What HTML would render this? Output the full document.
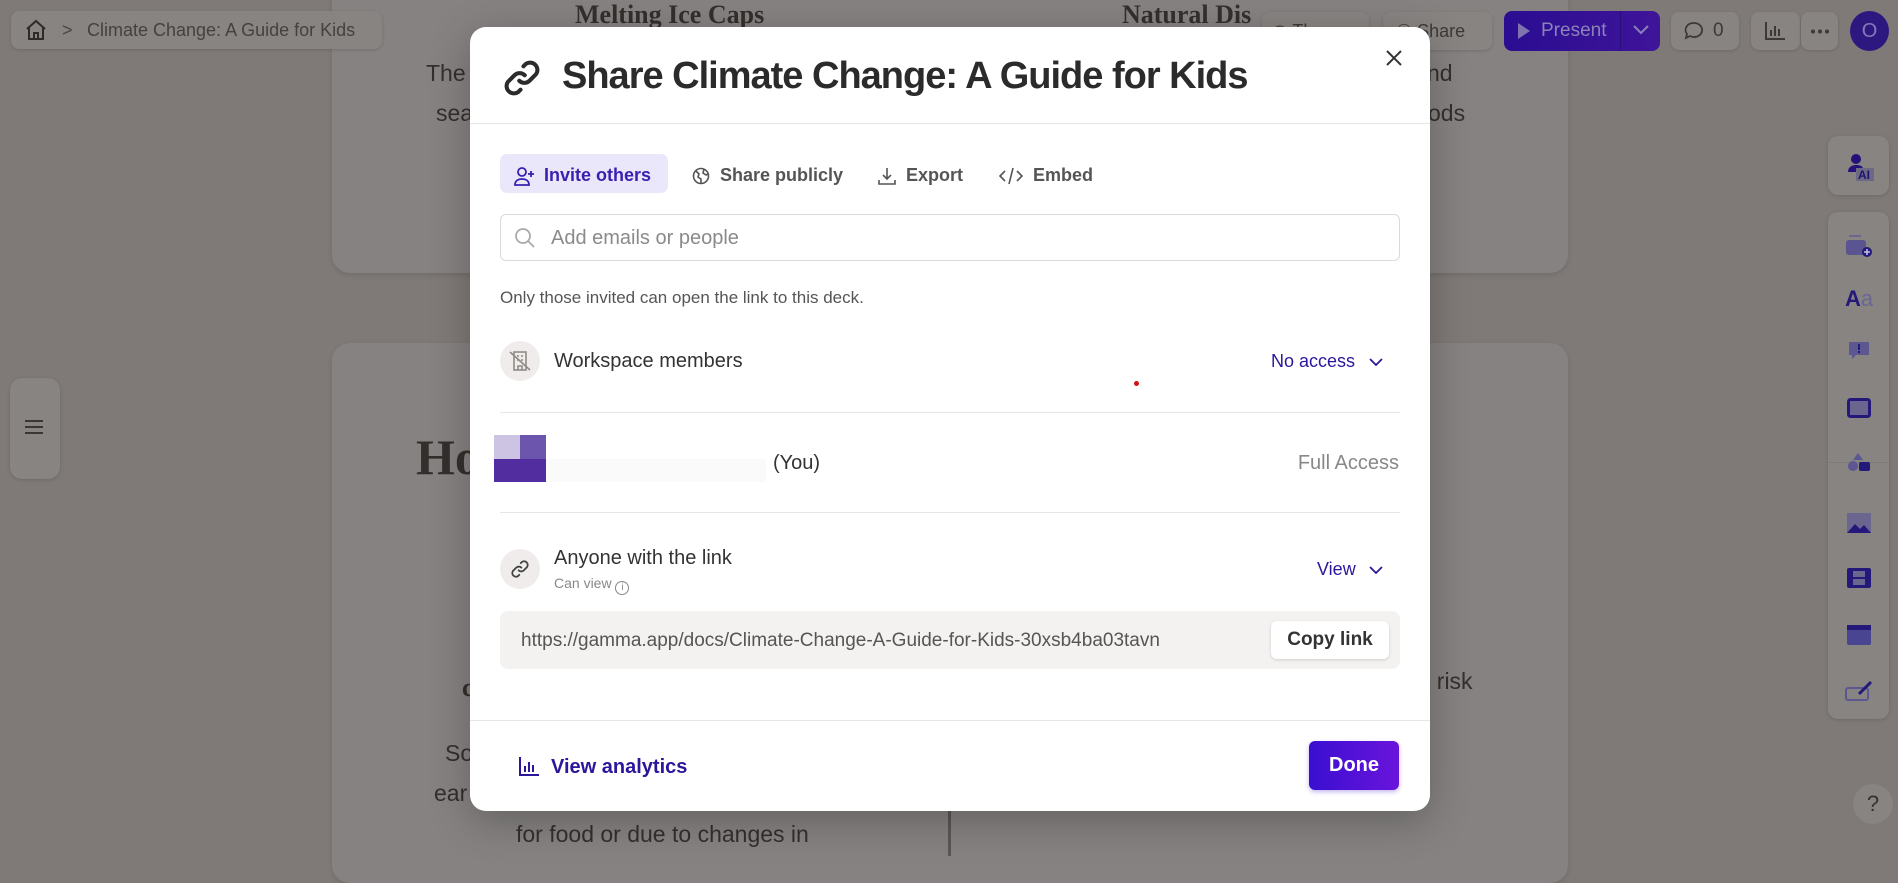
<!DOCTYPE html>
<html><head><meta charset="utf-8"><style>
*{box-sizing:border-box;margin:0;padding:0}
body{width:1898px;height:856px;overflow:hidden;background:#7f7a77;font-family:"Liberation Sans",sans-serif;position:relative}
.abs{position:absolute}
.card{position:absolute;background:#858281;border-radius:18px;box-shadow:0 2px 6px rgba(0,0,0,.12)}
.bgt{position:absolute;color:#332f2d;font-size:23px;white-space:nowrap}
.serif{font-family:"Liberation Serif",serif;font-weight:bold}
.tb{position:absolute;background:#878482;border-radius:8px;box-shadow:0 1px 3px rgba(0,0,0,.15);height:38px;top:12px}
.modal{position:absolute;left:470px;top:27px;width:960px;height:784px;background:#fff;border-radius:16px;box-shadow:0 10px 40px rgba(0,0,0,.25)}
.m{position:absolute;white-space:nowrap}
.hr{position:absolute;height:1px;background:#e8e6e4}
.tab{position:absolute;top:129px;height:39px;display:flex;align-items:center;font-size:18px;font-weight:bold;color:#555}
.side{position:absolute;left:1828px;width:61px;background:#878482;border-radius:10px;box-shadow:0 1px 4px rgba(0,0,0,.15)}
.ic{position:absolute}
</style></head><body>
<div class="card" style="left:332px;top:-20px;width:1236px;height:293px"></div>
<div class="card" style="left:332px;top:343px;width:1236px;height:540px"></div>
<div class="abs" style="left:948px;top:805px;width:3px;height:51px;background:#5a5654"></div>
<div class="bgt serif" style="left:575px;top:0px;font-size:26px">Melting Ice Caps</div>
<div class="bgt serif" style="left:1122px;top:0px;font-size:26px">Natural Dis</div>
<div class="bgt" style="left:426px;top:60px">The</div>
<div class="bgt" style="left:436px;top:100px">sea</div>
<div class="bgt" style="left:1427px;top:60px">nd</div>
<div class="bgt" style="left:1428px;top:100px">ods</div>
<div class="bgt serif" style="left:416px;top:428px;font-size:50px">Ho</div>
<div class="bgt" style="left:445px;top:740px">So</div>
<div class="bgt" style="left:434px;top:780px">ear</div>
<div class="bgt" style="left:516px;top:821px">for food or due to changes in</div>
<div class="bgt" style="left:1424px;top:668px">t risk</div>
<div class="bgt serif" style="left:462px;top:673px;font-size:26px">c</div>
<!-- top bar -->
<div class="tb" style="left:11px;width:371px;top:11px;height:38px"></div>
<svg class="abs" style="left:24px;top:19px" width="24" height="22" viewBox="0 0 24 22" fill="none" stroke="#2f2b29" stroke-width="2"><path d="M3 10L12 2l9 8M5 8v12h14V8M10 20v-6h4v6"/></svg>
<div class="m" style="left:62px;top:20px;color:#4a4644;font-size:18px">&gt;</div>
<div class="m" style="left:87px;top:20px;color:#45413f;font-size:18px">Climate Change: A Guide for Kids</div>
<div class="tb" style="left:1262px;width:107px"></div>
<div class="m" style="left:1272px;top:21px;color:#3d3937;font-size:18px">◷ Th</div>
<div class="tb" style="left:1383px;width:109px"></div>
<div class="m" style="left:1396px;top:21px;color:#3d3937;font-size:18px">⚇ Share</div>
<div class="abs" style="left:1504px;top:11px;width:156px;height:40px;border-radius:8px;background:linear-gradient(90deg,#2a0d91,#3f1499)"></div>
<div class="abs" style="left:1620px;top:11px;width:1px;height:40px;background:#26107a"></div>
<svg class="abs" style="left:1517px;top:22px" width="14" height="18"><path d="M1 1L13 9L1 17Z" fill="#7f74b0"/></svg>
<div class="m" style="left:1541px;top:20px;color:#8a82b8;font-size:19px">Present</div>
<svg class="abs" style="left:1632px;top:24px" width="18" height="12" fill="none" stroke="#8a82b8" stroke-width="2"><path d="M2 2l7 7 7-7"/></svg>
<div class="tb" style="left:1671px;width:68px"></div>
<svg class="abs" style="left:1684px;top:21px" width="20" height="20" fill="none" stroke="#3d3937" stroke-width="1.8"><path d="M10 2a8 7 0 1 1-4 13l-4 2 1-4A8 7 0 0 1 10 2z"/></svg>
<div class="m" style="left:1713px;top:20px;color:#3d3937;font-size:19px">0</div>
<div class="tb" style="left:1751px;width:49px"></div>
<svg class="abs" style="left:1765px;top:22px" width="20" height="18" fill="none" stroke="#3d3937" stroke-width="2"><path d="M1 0v17h19M6 14V8M10 14V4M14 14V7"/></svg>
<div class="tb" style="left:1801px;width:37px"></div>
<svg class="abs" style="left:1810px;top:29px" width="20" height="5" fill="#3d3937"><circle cx="3" cy="2.5" r="2"/><circle cx="10" cy="2.5" r="2"/><circle cx="17" cy="2.5" r="2"/></svg>
<div class="abs" style="left:1850px;top:11px;width:39px;height:40px;border-radius:50%;background:#2d1880;color:#847aba;font-size:20px;text-align:center;line-height:40px">O</div>
<!-- left menu -->
<div class="abs" style="left:10px;top:378px;width:50px;height:101px;background:#878482;border-radius:12px;box-shadow:0 1px 4px rgba(0,0,0,.15)"></div>
<svg class="abs" style="left:24px;top:419px" width="20" height="16" stroke="#3a3634" stroke-width="2"><path d="M1 2h18M1 8h18M1 14h18"/></svg>
<!-- right sidebar -->
<div class="side" style="top:136px;height:59px"></div>
<div class="side" style="top:212px;height:507px"></div>
<div class="abs" style="left:1829px;top:462px;width:59px;height:1px;background:#7c7876"></div>
<svg class="ic" style="left:1846px;top:152px" width="30" height="30"><circle cx="10" cy="7" r="5" fill="#22127a"/><path d="M2 20c0-5 4-7 8-7s6 1 7 3v4z" fill="#22127a"/><rect x="10" y="16" width="18" height="13" fill="#6d6885"/><text x="12" y="27" font-size="12" font-weight="bold" fill="#1d1470" font-family="Liberation Sans">AI</text></svg>
<svg class="ic" style="left:1845px;top:234px" width="28" height="24"><rect x="4" y="1" width="12" height="2" fill="#6a6690"/><rect x="1" y="6" width="20" height="15" rx="3" fill="#5a5590"/><circle cx="22" cy="18" r="5" fill="#24187a"/><path d="M22 15v6M19 18h6" stroke="#c8c4e0" stroke-width="1.5"/></svg>
<div class="m" style="left:1845px;top:286px;color:#24187a;font-size:22px;font-weight:bold">A<span style="color:#6a6690;font-weight:normal">a</span></div>
<svg class="ic" style="left:1848px;top:340px" width="22" height="22"><path d="M1 2h20v13H8l-4 4v-4H1z" fill="#5c5790"/><rect x="10" y="4" width="2" height="6" fill="#24187a"/><rect x="10" y="11" width="2" height="2" fill="#24187a"/></svg>
<svg class="ic" style="left:1847px;top:398px" width="24" height="20"><rect x="1.5" y="1.5" width="21" height="17" rx="2" fill="#6a6690" stroke="#24187a" stroke-width="3"/></svg>
<svg class="ic" style="left:1847px;top:452px" width="24" height="20"><path d="M11 1l5 7H6z" fill="#5c5790"/><circle cx="6" cy="14" r="5" fill="#5c5790"/><rect x="12" y="10" width="11" height="9" rx="2" fill="#24187a"/></svg>
<svg class="ic" style="left:1847px;top:513px" width="24" height="20"><rect x="0" y="0" width="24" height="20" fill="#6a6690"/><path d="M0 20l8-9 5 5 4-4 7 8z" fill="#24187a"/></svg>
<svg class="ic" style="left:1847px;top:568px" width="24" height="20"><rect x="0" y="0" width="24" height="20" rx="2" fill="#24187a"/><rect x="6" y="3" width="12" height="6" fill="#6a6690"/><rect x="6" y="11" width="12" height="6" fill="#6a6690"/></svg>
<svg class="ic" style="left:1847px;top:625px" width="24" height="20"><rect x="0" y="0" width="24" height="20" rx="2" fill="#4a4590"/><rect x="0" y="0" width="24" height="5" fill="#24187a"/></svg>
<svg class="ic" style="left:1845px;top:680px" width="28" height="22"><rect x="1" y="8" width="22" height="12" rx="2" fill="none" stroke="#5c5790" stroke-width="2"/><path d="M14 14l12-12" stroke="#24187a" stroke-width="3"/></svg>
<div class="abs" style="left:1853px;top:784px;width:40px;height:40px;border-radius:50%;background:#878482;color:#333;font-size:22px;text-align:center;line-height:40px">?</div>

<!-- modal -->
<div class="modal">
  <svg class="m" style="left:30px;top:29px" width="44" height="44" viewBox="0 0 24 24" fill="none" stroke="#2b2b2b" stroke-width="2.2" stroke-linecap="round"><path d="M10.5 13.5a4 4 0 0 0 5.6 0l3.5-3.5a4 4 0 0 0-5.6-5.6l-1.2 1.2"/><path d="M13.5 10.5a4 4 0 0 0-5.6 0l-3.5 3.5a4 4 0 0 0 5.6 5.6l1.2-1.2"/></svg>
  <div class="m" style="left:92px;top:28px;font-size:38px;font-weight:bold;color:#2b2b2b;letter-spacing:-1px">Share Climate Change: A Guide for Kids</div>
  <svg class="m" style="left:915px;top:22px" width="18" height="18" stroke="#333" stroke-width="2"><path d="M2 2l14 14M16 2L2 16"/></svg>
  <div class="hr" style="left:0;top:96px;width:960px"></div>

  <div class="abs" style="left:30px;top:127px;width:168px;height:39px;background:#ebe7fb;border-radius:7px"></div>
  <div class="tab" style="left:44px;color:#3a1fb0">
    <svg width="22" height="20" viewBox="0 0 22 20" fill="none" stroke="#3a1fb0" stroke-width="1.8"><circle cx="8" cy="6" r="4"/><path d="M1 19c0-4 3-6 7-6s7 2 7 6zM17 5v6M14 8h6"/></svg>
    <span style="margin-left:8px">Invite others</span></div>
  <div class="tab" style="left:222px">
    <svg width="18" height="18" viewBox="0 0 18 18" fill="none" stroke="#555" stroke-width="1.6"><circle cx="9" cy="9" r="7.5"/><path d="M4 4l3 3-1 3 3 2v4M12 2l-1 4 3 2 2-1"/></svg>
    <span style="margin-left:10px">Share publicly</span></div>
  <div class="tab" style="left:408px">
    <svg width="18" height="18" viewBox="0 0 18 18" fill="none" stroke="#555" stroke-width="1.6"><path d="M9 1v11M5 8l4 4 4-4M1 13v4h16v-4"/></svg>
    <span style="margin-left:10px">Export</span></div>
  <div class="tab" style="left:529px">
    <svg width="24" height="18" viewBox="0 0 24 18" fill="none" stroke="#555" stroke-width="1.6"><path d="M6 4L1 9l5 5M18 4l5 5-5 5M14 1l-4 16"/></svg>
    <span style="margin-left:10px">Embed</span></div>

  <div class="abs" style="left:30px;top:187px;width:900px;height:47px;border:1px solid #dcdad8;border-radius:6px"></div>
  <svg class="m" style="left:44px;top:200px" width="22" height="22" fill="none" stroke="#aaa" stroke-width="1.8"><circle cx="9" cy="9" r="7"/><path d="M14 14l6 6"/></svg>
  <div class="m" style="left:81px;top:200px;font-size:20px;color:#8a8a8a">Add emails or people</div>

  <div class="m" style="left:30px;top:261px;font-size:17px;color:#555">Only those invited can open the link to this deck.</div>

  <div class="abs" style="left:30px;top:314px;width:40px;height:40px;border-radius:50%;background:#efeceb"></div>
  <svg class="m" style="left:39px;top:323px" width="22" height="22" fill="none" stroke="#8f8a88" stroke-width="1.6"><rect x="5" y="2" width="12" height="18"/><path d="M8 6h2M12 6h2M8 10h2M12 10h2M9 20v-4h4v4M1 2l20 18"/></svg>
  <div class="m" style="left:84px;top:323px;font-size:20px;color:#333">Workspace members</div>
  <div class="m" style="left:801px;top:324px;font-size:18px;color:#2a179c">No access</div>
  <svg class="m" style="left:898px;top:329px" width="16" height="12" fill="none" stroke="#2a179c" stroke-width="1.8"><path d="M2 3l6 6 6-6"/></svg>
  <div class="abs" style="left:664px;top:354px;width:5px;height:5px;border-radius:50%;background:#d01515"></div>
  <div class="hr" style="left:30px;top:385px;width:900px"></div>

  <div class="abs" style="left:24px;top:408px;width:26px;height:24px;background:#cdc4e4"></div>
  <div class="abs" style="left:50px;top:408px;width:26px;height:24px;background:#6c55ac"></div>
  <div class="abs" style="left:24px;top:432px;width:52px;height:23px;background:#512da0"></div>
  <div class="abs" style="left:76px;top:432px;width:220px;height:23px;background:#fafafa"></div>
  <div class="m" style="left:303px;top:425px;font-size:20px;color:#333">(You)</div>
  <div class="m" style="left:929px;top:425px;font-size:20px;color:#888;transform:translateX(-100%)">Full Access</div>
  <div class="hr" style="left:30px;top:485px;width:900px"></div>

  <div class="abs" style="left:30px;top:522px;width:40px;height:40px;border-radius:50%;background:#efeceb"></div>
  <svg class="m" style="left:39px;top:531px" width="22" height="22" viewBox="0 0 24 24" fill="none" stroke="#444" stroke-width="2" stroke-linecap="round"><path d="M10.5 13.5a4 4 0 0 0 5.6 0l3.5-3.5a4 4 0 0 0-5.6-5.6l-1.2 1.2"/><path d="M13.5 10.5a4 4 0 0 0-5.6 0l-3.5 3.5a4 4 0 0 0 5.6 5.6l1.2-1.2"/></svg>
  <div class="m" style="left:84px;top:520px;font-size:20px;color:#333">Anyone with the link</div>
  <div class="m" style="left:84px;top:548px;font-size:14px;color:#888">Can view <span style="display:inline-block;width:14px;height:14px;border:1px solid #888;border-radius:50%;font-size:10px;text-align:center;line-height:12px;vertical-align:-2px">i</span></div>
  <div class="m" style="left:847px;top:532px;font-size:18px;color:#2a179c">View</div>
  <svg class="m" style="left:898px;top:537px" width="16" height="12" fill="none" stroke="#2a179c" stroke-width="1.8"><path d="M2 3l6 6 6-6"/></svg>

  <div class="abs" style="left:30px;top:584px;width:900px;height:58px;background:#f4f2f1;border-radius:8px"></div>
  <div class="m" style="left:51px;top:603px;font-size:19px;color:#555">https://gamma.app/docs/Climate-Change-A-Guide-for-Kids-30xsb4ba03tavn</div>
  <div class="abs" style="left:801px;top:594px;width:118px;height:38px;background:#fff;border-radius:6px;box-shadow:0 1px 3px rgba(0,0,0,.15);font-size:19px;font-weight:bold;color:#333;text-align:center;line-height:38px">Copy link</div>

  <div class="hr" style="left:0;top:693px;width:960px"></div>
  <svg class="m" style="left:49px;top:730px" width="20" height="19" fill="none" stroke="#2a179c" stroke-width="2"><path d="M1 0v18h19M6 15V9M10 15V5M14 15V8"/></svg>
  <div class="m" style="left:81px;top:729px;font-size:20px;font-weight:bold;color:#2a179c">View analytics</div>
  <div class="abs" style="left:839px;top:714px;width:90px;height:49px;border-radius:6px;background:linear-gradient(90deg,#3a0fd0,#6a14dc);color:#fff;font-size:20px;font-weight:bold;text-align:center;line-height:49px;box-shadow:0 2px 5px rgba(60,20,200,.3)">Done</div>
</div>
</body></html>
